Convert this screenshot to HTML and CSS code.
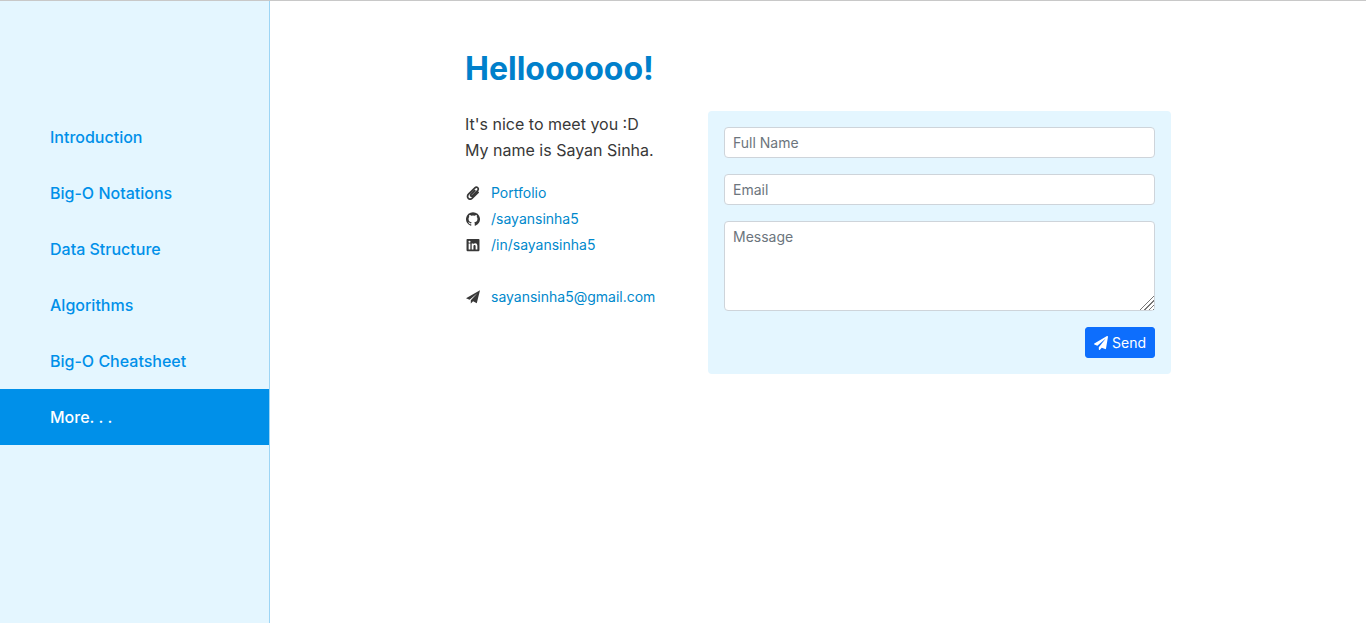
FILE: index.html
```html
<!DOCTYPE html>
<html lang="en">
<head>
<meta charset="utf-8">
<meta name="viewport" content="width=device-width, initial-scale=1">
<title>Helloooooo!</title>
<link rel="stylesheet" href="styles.css">
</head>
<body>
<div class="layout">
  <nav class="sidebar">
    <a class="nav-link" href="#introduction">Introduction</a>
    <a class="nav-link" href="#notations">Big-O Notations</a>
    <a class="nav-link" href="#structure">Data Structure</a>
    <a class="nav-link" href="#algorithms">Algorithms</a>
    <a class="nav-link" href="#cheatsheet">Big-O Cheatsheet</a>
    <a class="nav-link active" href="#more" aria-current="page">More. . .</a>
  </nav>
  <main class="main">
    <div class="content">
      <h1 class="title">Helloooooo!</h1>
      <div class="columns">
        <section class="about">
          <p class="intro">It's nice to meet you :D<br>My name is Sayan Sinha.</p>
          <ul class="links">
            <li>
              <svg class="icon" viewBox="0 0 16 16" aria-hidden="true"><g fill="none" stroke="currentColor" stroke-width="2" stroke-linecap="round"><path d="M10 5.400 5.700 9.700c-1 1 .5 2.600 1.500 1.600l6.100-6.100c2.200-2.200-.9-5.300-3.100-3.100L2.900 9.400c-3.300 3.300 1.200 7.600 4.500 4.300l6.400-6.400"/></g></svg>
              <a href="#portfolio">Portfolio</a>
            </li>
            <li>
              <svg class="icon" viewBox="0 0 16 16" aria-hidden="true"><path fill="currentColor" d="M8 .2a8 8 0 0 0-2.530 15.590c.4.074.547-.174.547-.385 0-.191-.007-.820-.010-1.489-2.226.484-2.695-.944-2.695-.944-.364-.925-.888-1.171-.888-1.171-.726-.497.055-.486.055-.486.803.056 1.226.824 1.226.824.714 1.223 1.872.869 2.328.665.072-.517.279-.870.508-1.070-1.777-.202-3.645-.888-3.645-3.954 0-.873.313-1.587.824-2.147-.083-.202-.357-1.015.077-2.117 0 0 .672-.215 2.201.820A7.700 7.700 0 0 1 8 4.066a7.700 7.700 0 0 1 2.003.270c1.527-1.035 2.198-.820 2.198-.820.435 1.102.162 1.916.079 2.117.513.560.823 1.274.823 2.147 0 3.073-1.872 3.749-3.653 3.947.287.248.543.735.543 1.481 0 1.070-.009 1.932-.009 2.195 0 .213.144.462.550.384A8 8 0 0 0 8 .2z"/></svg>
              <a href="#github">/sayansinha5</a>
            </li>
            <li>
              <svg class="icon" viewBox="0 0 16 16" aria-hidden="true"><path fill="currentColor" fill-rule="evenodd" d="M1.500 1h13a.9.9 0 0 1 .9.9v12.200a.9.9 0 0 1-.9.9h-13a.9.9 0 0 1-.9-.9V1.900a.9.9 0 0 1 .9-.9zM3 6.200V13h2V6.200zM4 3a1.200 1.200 0 1 0 0 2.400A1.200 1.200 0 0 0 4 3zM6.500 6.200V13h2V9.400c0-2 2.500-2 2.500 0V13h2V8.900c0-3-3-3.600-4.500-1.800v-.9z"/></svg>
              <a href="#linkedin">/in/sayansinha5</a>
            </li>
            <li class="mail">
              <svg class="icon" viewBox="0 0 16 16" aria-hidden="true"><path fill="currentColor" d="M16 .4 0 9.300l4.100 1.700L13 3.700 5.500 11.700V15.500l2.600-2.600 4.200 2.100z"/></svg>
              <a href="mailto:sayansinha5@gmail.com">sayansinha5@gmail.com</a>
            </li>
          </ul>
        </section>
        <form class="form">
          <input class="field" type="text" placeholder="Full Name" aria-label="Full Name">
          <input class="field" type="email" placeholder="Email" aria-label="Email">
          <textarea class="field message" placeholder="Message" aria-label="Message"></textarea>
          <button class="send" type="button">
            <svg class="send-icon" viewBox="0 0 512 512" aria-hidden="true"><path fill="currentColor" d="M476 3.200 12.500 270.600c-18.100 10.400-15.800 35.600 2.200 43.200L121 358.400l287.300-253.200c5.500-4.900 13.300 2.600 8.600 8.300L176 407v80.500c0 23.600 28.500 32.900 42.500 15.800L282 426l124.600 52.200c14.200 6 30.400-2.900 33-18.200l72-432C515 7.800 493.300-6.800 476 3.200z"/></svg>
            Send
          </button>
        </form>
      </div>
    </div>
  </main>
</div>
</body>
</html>
```
FILE: styles.css
```css
* {
  box-sizing: border-box;
}

body {
  margin: 0;
  font-family: Inter, "Liberation Sans", sans-serif;
  font-size: 16px;
  color: #383838;
  background: #fff;
}

.layout {
  display: flex;
  min-height: 100vh;
  border-top: 1px solid #c8c8c8;
}

.sidebar {
  flex: none;
  width: 270px;
  padding-top: 108px;
  background: #e4f6ff;
  border-right: 1px solid #9dd5f5;
}

.nav-link {
  display: block;
  padding: 0 50px;
  line-height: 56px;
  font-weight: 500;
  color: #0090e9;
  text-decoration: none;
}

.nav-link.active {
  color: #fff;
  background: #0090e9;
}

.main {
  flex: 1;
  padding: 48px 16px;
}

.content {
  max-width: 706px;
  margin: 0 auto;
}

.title {
  margin: 0 0 22px;
  font-size: 32px;
  line-height: 40px;
  font-weight: 700;
  color: #0080cb;
}

.columns {
  display: flex;
  align-items: flex-start;
  gap: 16px;
}

.about {
  flex: none;
  width: 227px;
}

.intro {
  margin: 0 0 17px;
  line-height: 26px;
}

.links {
  margin: 0;
  padding: 0;
  list-style: none;
  font-size: 14px;
  line-height: 26px;
}

.links li {
  display: flex;
  align-items: center;
  gap: 10px;
}

.links .mail {
  margin-top: 26px;
}

.links a {
  color: #0088cc;
  text-decoration: none;
}

.icon {
  width: 14px;
  height: 14px;
  margin: 0 1px;
}

.form {
  flex: 1;
  display: flex;
  flex-direction: column;
  gap: 16px;
  padding: 16px;
  background: #e4f6ff;
  border-radius: 4px;
}

.field {
  display: block;
  width: 100%;
  margin: 0;
  padding: 4px 8px;
  font: inherit;
  font-size: 14px;
  line-height: 21px;
  color: #212529;
  background: #fff;
  border: 1px solid #ced4da;
  border-radius: 4px;
}

input.field {
  height: 31px;
}

.field::placeholder {
  color: #6c757d;
  opacity: 1;
}

.message {
  height: 90px;
  resize: vertical;
}

/* Wide striped grip in the corner of the message box */
.message::-webkit-resizer {
  background:
    linear-gradient(135deg, #fff 48%, transparent 48%),
    repeating-linear-gradient(135deg, #fff 0 2px, #777 2px 3px);
}

.send {
  display: flex;
  align-items: center;
  align-self: flex-end;
  gap: 4px;
  padding: 4px 8px;
  font: inherit;
  font-size: 14px;
  line-height: 21px;
  color: #fff;
  background: #0d6efd;
  border: 1px solid #0d6efd;
  border-radius: 3px;
}

.send-icon {
  width: 14px;
  height: 14px;
}
```
